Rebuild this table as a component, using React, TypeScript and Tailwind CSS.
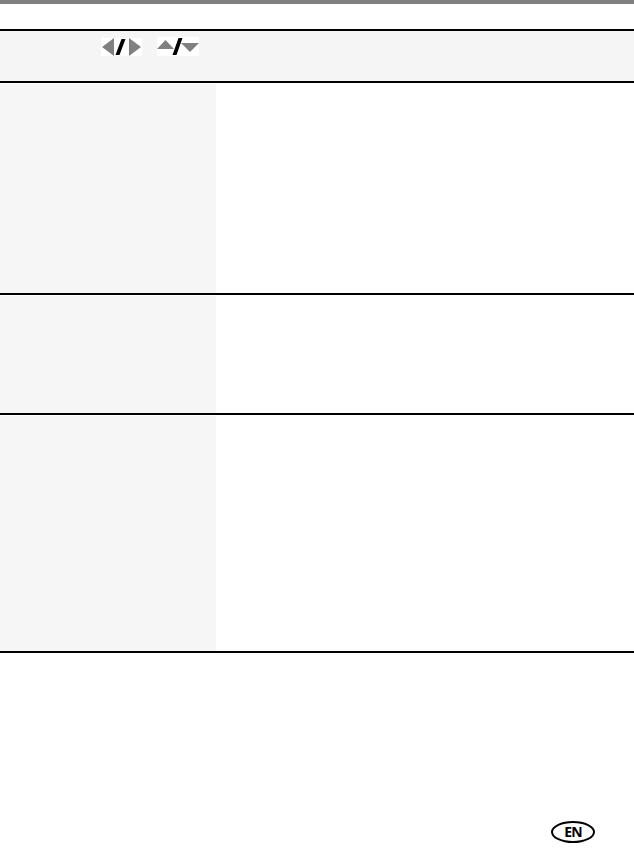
import React from 'react';

function LeftRightIcon() {
  return (
    <div className="w-[41px] h-[18px] bg-white flex items-center">
      <svg width="41" height="18" viewBox="0 0 41 18">
        <polygon points="13,0 13,18 1,9" fill="#808080" />
        <polygon points="20.5,1 24.5,1 18.5,17 14.5,17" fill="#000" />
        <polygon points="28,0 28,18 40,9" fill="#808080" />
      </svg>
    </div>
  );
}

function UpDownIcon() {
  return (
    <div className="w-[42px] h-[19px] bg-white flex items-center">
      <svg width="42" height="19" viewBox="0 0 42 19">
        <polygon points="0,12 17,12 8.5,3" fill="#808080" />
        <polygon points="21.5,1 25.5,1 19.5,18 15.5,18" fill="#000" />
        <polygon points="24,6 42,6 33,15" fill="#808080" />
      </svg>
    </div>
  );
}

function Rule() {
  return <div className="h-[2px] w-full bg-black" />;
}

function TableRow({ height }: { height: number }) {
  const h = height === 210 ? 'h-[210px]' : height === 118 ? 'h-[118px]' : 'h-[236px]';
  return (
    <div className={`flex ${h}`}>
      <div className="w-[216px] bg-[#f6f6f6] mt-px" />
      <div className="flex-1 bg-white" />
    </div>
  );
}

export default function App() {
  return (
    <div className="w-[634px] h-[848px] bg-white relative overflow-hidden" style={{ fontFamily: '"Open Sans", "Liberation Sans", sans-serif' }}>
      <div className="h-[4px] bg-[#808080]" />
      <div className="h-[25px]" />
      <Rule />
      <div className="h-[50px] bg-[#f5f5f5] flex items-start pt-[7px] pl-[101px] gap-[15px]">
        <LeftRightIcon />
        <div className="-mt-px">
          <UpDownIcon />
        </div>
      </div>
      <Rule />
      <TableRow height={210} />
      <Rule />
      <TableRow height={118} />
      <Rule />
      <TableRow height={237} />
      <Rule />
      <div className="flex justify-end pr-[39px] pt-[168px]">
        <div className="w-[44px] h-[22px] rounded-[50%] border-2 border-black flex items-center justify-center">
          <span className="text-[14px] font-bold leading-none tracking-[-0.8px] text-black" style={{ fontFamily: '"Open Sans", "Liberation Sans Narrow", sans-serif' }}>EN</span>
        </div>
      </div>
    </div>
  );
}
